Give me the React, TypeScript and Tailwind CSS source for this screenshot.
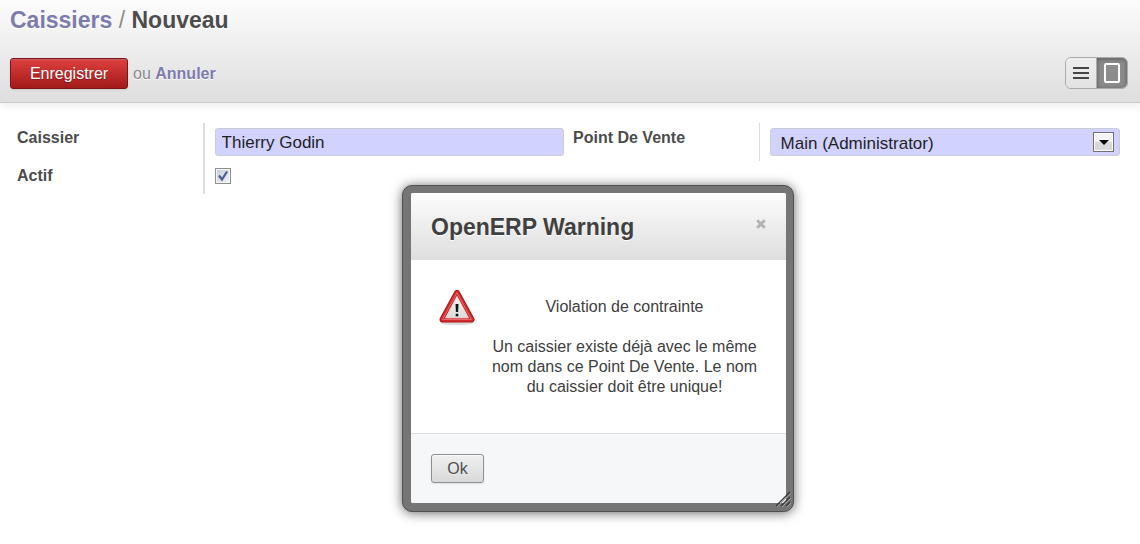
import { useState } from "react";
import type { ReactNode } from "react";

function Field({ id, label, line, children }: { id: string; label: string; line: string; children: ReactNode }) {
  return (
    <div className="flex">
      <label htmlFor={id} className="w-[35%] shrink-0 pt-[5px] pl-[9px] font-bold">
        {label}
      </label>
      <div className={`flex grow items-center pl-2.5 ${line}`}>{children}</div>
    </div>
  );
}

function WarningIcon() {
  return (
    <svg width="40" height="40" viewBox="0 0 40 40" aria-hidden="true" className="shrink-0">
      <defs>
        <linearGradient id="warn-red" x1="0" y1="0" x2="0" y2="1">
          <stop offset="0" stopColor="#e25050" />
          <stop offset="0.6" stopColor="#d02526" />
          <stop offset="1" stopColor="#b81a1c" />
        </linearGradient>
        <linearGradient id="warn-face" x1="0" y1="0" x2="0" y2="1">
          <stop offset="0" stopColor="#f6f6f6" />
          <stop offset="1" stopColor="#dadada" />
        </linearGradient>
      </defs>
      <ellipse cx="20" cy="36" rx="17" ry="2" fill="#000" opacity="0.14" />
      <path d="M20 6 L34.500 32.500 L5.500 32.500 Z" fill="url(#warn-red)" stroke="#ad1a1d" strokeWidth="6" strokeLinejoin="round" />
      <path d="M20 6 L34.500 32.500 L5.500 32.500 Z" fill="url(#warn-red)" stroke="#d02a2b" strokeWidth="4" strokeLinejoin="round" />
      <path d="M20 5.500 L5.500 32.500 H34.500 Z" fill="none" stroke="#e26a6a" strokeWidth="1" strokeLinejoin="round" />
      <path d="M20 9.500 L31.300 30.800 L8.700 30.800 Z" fill="url(#warn-face)" stroke="#f3dcdc" strokeWidth="1" strokeLinejoin="round" />
      <path d="M18.500 17 h3 l-0.400 8 h-2.200 Z" fill="#111" />
      <rect x="18.700" y="26.800" width="2.600" height="2.500" fill="#111" />
    </svg>
  );
}

export default function App() {
  const [name, setName] = useState("Thierry Godin");
  const [active, setActive] = useState(true);
  return (
    <div className="relative min-h-screen bg-white text-base leading-5 text-[#4c4c4c] [font-family:'Liberation_Sans',Arial,sans-serif]">
      <header className="border-b border-[#cacaca] bg-linear-to-b from-[#fcfcfc] to-[#dedede] pt-1.5 pr-3 pb-[13px] pl-2.5 shadow-[0_3px_8px_rgba(0,0,0,0.08)]">
        <h1 className="text-[23px] leading-7 font-bold [text-shadow:0_1px_1px_white]">
          <a href="#caissiers" className="text-[#7c7bad]">Caissiers</a>
          <span className="font-normal text-[#8a8a8a]"> / </span>
          <span>Nouveau</span>
        </h1>
        <div className="mt-[23px] flex h-8 items-center justify-between">
          <div className="flex items-center gap-[5px] text-[#8a8a8a] [text-shadow:0_1px_1px_white]">
            <button
              type="button"
              className="h-[31px] w-[118px] rounded-[3px] border border-[#7d1316] bg-linear-to-b from-[#df3f3f] to-[#a21a1a] pt-px text-white shadow-[0_1px_2px_rgba(0,0,0,0.1),inset_0_1px_1px_rgba(155,155,155,0.4)] [text-shadow:0_1px_1px_rgba(0,0,0,0.3)]"
            >
              Enregistrer
            </button>
            <span className="pt-0.5">
              ou <a href="#annuler" className="font-bold text-[#7c7bad]">Annuler</a>
            </span>
          </div>
          <div className="flex h-8 w-[63px] overflow-hidden rounded-md border border-[#ababab]">
            <button type="button" aria-label="Liste" className="flex w-[31px] items-center justify-center border-r border-[#ababab] bg-linear-to-b from-[#eeeeee] to-[#e2e2e2]">
              <svg width="16" height="12" viewBox="0 0 16 12" fill="#454545" aria-hidden="true">
                <path d="M0 0h16v2H0zM0 5h16v2H0zM0 10h16v2H0z" />
              </svg>
            </button>
            <button type="button" aria-label="Formulaire" aria-pressed="true" className="flex grow items-center justify-center bg-[#8c8c8c] shadow-[inset_0_1px_5px_rgba(0,0,0,0.35)]">
              <svg width="16" height="20" viewBox="0 0 16 20" fill="none" stroke="white" strokeWidth="2" aria-hidden="true">
                <rect x="1" y="1" width="14" height="18" rx="1" />
              </svg>
            </button>
          </div>
        </div>
      </header>

      <main className="grid grid-cols-2 items-start pt-5 pr-5 pl-2">
        <div className="grid">
          <Field id="caissier" label="Caissier" line="border-l-2 border-[#dddddd]">
            <input
              id="caissier"
              value={name}
              onChange={(e) => setName(e.target.value)}
              className="my-[5px] h-7 w-full min-w-0 rounded-[3px] border border-[#ccccd8] bg-[#d2d2ff] px-1.5 pt-0.5 text-[17px] text-[#1f1f1f] outline-none"
            />
          </Field>
          <Field id="actif" label="Actif" line="h-[33px] border-l-2 border-[#dddddd] pb-1">
            <input
              id="actif"
              type="checkbox"
              checked={active}
              onChange={(e) => setActive(e.target.checked)}
              className="peer size-4 appearance-none border border-[#8e8f8f] bg-linear-to-br from-[#c4cbd6] to-[#f6f6f6] shadow-[inset_0_0_0_1px_#f4f4f4]"
            />
            <svg viewBox="0 0 16 16" aria-hidden="true" className="pointer-events-none invisible -ml-4 size-4 peer-checked:visible">
              <path d="M4 7.500 L7 11.500 L12 3.500" fill="none" stroke="#4a5f97" strokeWidth="2.200" />
            </svg>
          </Field>
        </div>
        <Field id="pdv" label="Point De Vente" line="border-l border-[#dddddd]">
          <div className="my-[5px] flex w-full items-center rounded-[3px] border border-[#ccccd8] bg-[#d2d2ff]">
            <select id="pdv" className="-mr-[26px] h-[26px] grow appearance-none bg-transparent pt-1 pr-8 pl-2.5 text-[17px] text-[#1f1f1f] outline-none">
              <option>Main (Administrator)</option>
            </select>
            <span className="pointer-events-none mr-[5px] flex h-5 w-[21px] items-center justify-center border border-[#707070] bg-linear-to-b from-[#f4f4f4] from-50% to-[#d8d8d8] to-50% shadow-[inset_0_0_0_1px_#fcfcfc]">
              <svg width="10" height="5" viewBox="0 0 10 5" aria-hidden="true">
                <path d="M0 0h10L5 5z" fill="#000" />
              </svg>
            </span>
          </div>
        </Field>
      </main>

      <section
        role="dialog"
        aria-labelledby="dialog-title"
        className="absolute top-[185px] left-[402px] w-[392px] rounded-[10px] border border-[#505050] bg-[#757575] px-2 pt-[7px] pr-[7px] pb-2 shadow-[0_1px_12px_rgba(0,0,0,0.6)]"
      >
        <div className="overflow-hidden rounded-xs bg-white">
          <div className="flex justify-between bg-linear-to-b from-[#fcfcfc] to-[#dedede] pt-5 pr-5 pb-[19px] pl-5">
            <h2 id="dialog-title" className="text-[23px] leading-7 font-bold text-[#404040] [text-shadow:0_1px_1px_white]">
              OpenERP Warning
            </h2>
            <button type="button" aria-label="Fermer" className="h-[22px]">
              <svg width="10" height="10" viewBox="0 0 10 10" aria-hidden="true">
                <path d="M1.200 1.200 L8.800 8.800 M8.800 1.200 L1.200 8.800" stroke="#b3b3b3" strokeWidth="3" />
              </svg>
            </button>
          </div>
          <div className="flex h-[173px] gap-3 pt-[27px] pr-[26px] pl-[26px] text-[#404040]">
            <WarningIcon />
            <div className="grow pt-2.5 text-center">
              <p>Violation de contrainte</p>
              <p className="mt-5">Un caissier existe déjà avec le même nom dans ce Point De Vente. Le nom du caissier doit être unique!</p>
            </div>
          </div>
          <div className="border-t border-[#dddddd] bg-[#f5f7f9] px-5 pt-5 pb-5">
            <button
              type="button"
              className="block h-[29px] w-[53px] rounded-[3px] border border-[#8f8f8f] bg-linear-to-b from-[#f0f0f0] to-[#d9d9d9] text-[#4c4c4c] shadow-[0_1px_2px_rgba(0,0,0,0.1),inset_0_1px_1px_rgba(255,255,255,0.8)] [text-shadow:0_1px_1px_rgba(255,255,255,0.5)]"
            >
              Ok
            </button>
          </div>
        </div>
        <svg width="16" height="16" viewBox="0 0 16 16" fill="none" aria-hidden="true" className="absolute right-0.5 bottom-1">
          <path d="M2 16 L16 2 M7 16 L16 7 M12 16 L16 12" stroke="#a0a0a0" strokeWidth="1" />
          <path d="M1 15 L15 1 M6 15 L15 6 M11 15 L15 11" stroke="#383838" strokeWidth="1.400" />
        </svg>
      </section>
    </div>
  );
}
